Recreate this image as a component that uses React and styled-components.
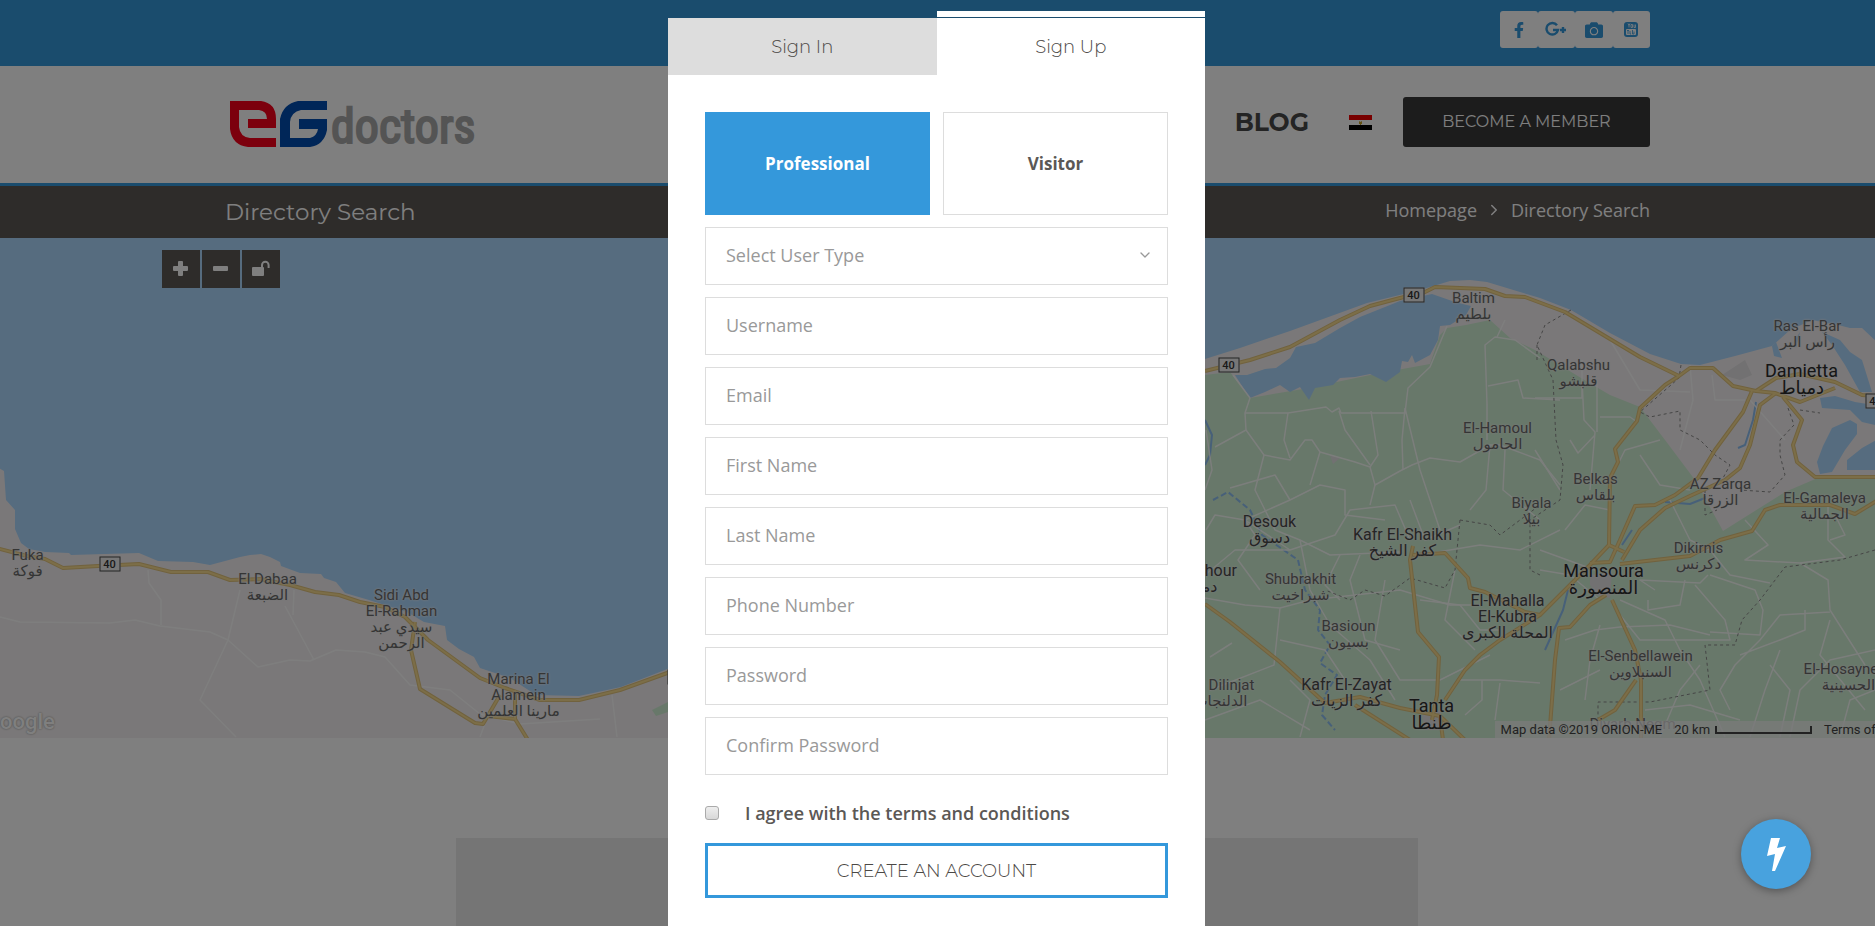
import React from 'react';
import styled, { createGlobalStyle, css } from 'styled-components';
import { FaFacebookF, FaCamera } from 'react-icons/fa';
import { FiChevronDown, FiChevronRight } from 'react-icons/fi';

const blue = '#3498db';
const heading = "Montserrat, Inter, 'Open Sans', sans-serif";
const bodyFont = "'Open Sans', 'Noto Sans', sans-serif";
const mapFont = "Roboto, 'DejaVu Sans', sans-serif";

const GlobalStyle = createGlobalStyle`
  *, *::before, *::after { box-sizing: border-box; }
  html, body, #root { height: 100%; }
  body {
    margin: 0;
    overflow: hidden;
    background: #fff;
    color: #5b5855;
    font-family: ${bodyFont};
    font-size: 18px;
  }
  button, input, select { font: inherit; color: inherit; margin: 0; }
`;

const Page = styled.div`
  min-height: 100%;
  display: flex;
  flex-direction: column;
`;

const Container = styled.div`
  width: 100%;
  max-width: 1425px;
  margin: 0 auto;
  display: flex;
  align-items: center;
  justify-content: ${(p) => (p.$end ? 'flex-end' : 'space-between')};
`;

const TopBar = styled.div`
  background: ${blue};
  padding: 11px 0 18px;
`;

const SocialList = styled.nav`
  display: grid;
  grid-template-columns: repeat(4, 1fr);
  width: 150px;
  height: 37px;
`;

const SocialLink = styled.a`
  display: flex;
  align-items: center;
  justify-content: center;
  border-radius: 3px;
  background: #fff;
  color: ${blue};
  font-size: 16px;
`;

const Header = styled.header`
  background: #fff;
  border-bottom: 3px solid ${blue};
  padding: 31px 0 36px;
`;

const Brand = styled.a`
  display: flex;
  align-items: flex-end;
  gap: 3px;
  height: 50px;
  padding-left: 5px;
  text-decoration: none;
`;

const BrandWord = styled.span`
  color: #a8a8a8;
  font-family: 'Liberation Sans Narrow', 'Roboto Condensed', 'DejaVu Sans Condensed', sans-serif;
  font-size: 48px;
  line-height: 40px;
  -webkit-text-stroke: 2px #a8a8a8;
`;

const MainNav = styled.nav`
  display: flex;
  align-items: center;
`;

const NavLink = styled.a`
  color: #484848;
  font: 700 25px/32px ${heading};
  text-decoration: none;
  margin-right: 40px;
`;

const Flag = styled.a`
  display: flex;
  margin-right: 31px;
`;

const MemberButton = styled.button`
  width: 247px;
  height: 50px;
  border: 0;
  border-radius: 3px;
  background: #383838;
  color: #fff;
  font: 400 16px/24px ${heading};
`;

const TitleBar = styled.div`
  background: #5c5855;
  color: #fff;
  height: 52px;
  display: flex;
`;

const PageTitle = styled.h1`
  margin: 0;
  font: 400 23px/32px ${heading};
`;

const Breadcrumb = styled.nav`
  display: flex;
  align-items: center;
  gap: 8px;
  line-height: 24px;
  padding-bottom: 4px;
  a { color: inherit; text-decoration: none; }
`;

const MapArea = styled.section`
  position: relative;
  height: 500px;
  overflow: hidden;
  background: #acd8ff;
`;

const MapDrawing = styled.svg`
  position: absolute;
  top: 0;
  left: calc(50% - 938px);
  width: 1876px;
  height: 500px;
  overflow: visible;
`;

const MapPin = styled.div`
  position: absolute;
  left: calc(50% + ${(p) => p.$x - 937}px);
  top: ${(p) => p.$y - 238}px;
  transform: translate(-50%, -8px);
  text-align: center;
  white-space: nowrap;
  font-family: ${mapFont};
  font-size: 15px;
  line-height: 16px;
  color: #6a6a6a;
  text-shadow: 0 0 2px #eee, 0 0 2px #eee;
  ${(p) => p.$size === 'town' && css`font-size: 16px; color: #4a4a4a;`}
  ${(p) => p.$size === 'city' && css`font-size: 18px; line-height: 17px; color: #2c2c2c;`}
`;

const RoadShield = styled.span`
  position: absolute;
  left: calc(50% + ${(p) => p.$x - 937}px);
  top: ${(p) => p.$y - 238}px;
  transform: translate(-50%, -50%);
  width: 21px;
  height: 15px;
  border: 1px solid #4a4a4a;
  background: #eee;
  color: #333;
  font: 500 11px/13px ${mapFont};
  text-align: center;
`;

const MapControls = styled.div`
  position: relative;
  display: flex;
  gap: 2px;
  width: 100%;
  max-width: 1552px;
  margin: 12px auto 0;
`;

const MapButton = styled.button`
  width: 38px;
  height: 38px;
  border: 0;
  padding: 0 0 2px;
  display: flex;
  align-items: center;
  justify-content: center;
  background: #5c5855;
  color: #fff;
`;

const GoogleMark = styled.span`
  position: absolute;
  left: -15px;
  bottom: 3px;
  font: 500 22px/26px ${mapFont};
  color: #fff;
  text-shadow: 0 0 2px #888;
`;

const MapFooter = styled.div`
  position: absolute;
  right: -26px;
  bottom: 0;
  height: 17px;
  display: flex;
  align-items: center;
  gap: 12px;
  padding-left: 6px;
  background: rgba(245, 245, 245, 0.75);
  color: #444;
  font: 400 13px/17px ${mapFont};
  white-space: nowrap;
`;

const Scale = styled.span`
  display: flex;
  align-items: center;
  gap: 5px;
  &::after {
    content: '';
    width: 97px;
    height: 8px;
    border: 2px solid #444;
    border-top: 0;
  }
`;

const Results = styled.main`
  flex: 1;
  padding: 100px 2px 0 0;
  background: #fff;
  display: flex;
  justify-content: center;
`;

const ResultsPanel = styled.div`
  width: 962px;
  min-height: 87px;
  background: #ebebeb;
`;

const Overlay = styled.div`
  position: fixed;
  inset: 0;
  overflow: hidden;
  display: flex;
  justify-content: center;
  align-items: flex-start;
  padding: 18px 2px 0 0;
  background: rgba(0, 0, 0, 0.5);
`;

const Dialog = styled.div`
  width: 537px;
  max-width: 100%;
  background: #fff;
`;

const Tabs = styled.div`
  display: flex;
`;

const Tab = styled.button`
  position: relative;
  flex: 1;
  height: 57px;
  border: 0;
  background: ${(p) => (p.$active ? '#fff' : '#ddd')};
  color: #4b4845;
  font: 300 18px/24px ${heading};
  ${(p) =>
    p.$active &&
    css`
      &::before {
        content: '';
        position: absolute;
        left: 0;
        right: 0;
        top: -7px;
        height: 6px;
        background: #fff;
      }
    `}
`;

const Form = styled.form`
  display: flex;
  flex-direction: column;
  gap: 12px;
  padding: 37px 37px 40px;
`;

const RoleRow = styled.div`
  display: grid;
  grid-template-columns: 1fr 1fr;
  gap: 13px;
`;

const RoleButton = styled.button`
  height: 103px;
  border: 1px solid ${(p) => (p.$active ? blue : '#ddd')};
  background: ${(p) => (p.$active ? blue : '#fff')};
  color: ${(p) => (p.$active ? '#fff' : '#5b5855')};
  font-weight: 700;
  font-size: 17px;
`;

const fieldStyle = css`
  width: 100%;
  height: 58px;
  border: 1px solid #ddd;
  border-radius: 0;
  background: #fff;
  padding: 0 20px 2px;
  color: #999;
  font-size: 18px;
`;

const Field = styled.input`
  ${fieldStyle}
  &::placeholder { color: #999; opacity: 1; }
`;

const SelectWrap = styled.div`
  position: relative;
  svg {
    position: absolute;
    right: 15px;
    top: 20px;
    color: #999;
    pointer-events: none;
  }
`;

const Select = styled.select`
  ${fieldStyle}
  display: block;
  appearance: none;
`;

const Agreement = styled.label`
  display: flex;
  align-items: center;
  gap: 26px;
  margin: 13px 0 5px;
  height: 26px;
  font-weight: 600;
  line-height: 26px;
`;

const Checkbox = styled.input`
  appearance: none;
  width: 14px;
  height: 14px;
  border: 1px solid #aaa;
  border-radius: 3px;
  background: linear-gradient(#eee, #d8d8d8);
`;

const SubmitButton = styled.button`
  height: 55px;
  border: 3px solid ${blue};
  background: #fff;
  color: #4b4845;
  font: 300 18px/24px ${heading};
`;

const QuickButton = styled.button`
  position: fixed;
  right: 64px;
  bottom: 37px;
  width: 70px;
  height: 70px;
  padding: 0;
  border: 0;
  border-radius: 50%;
  display: flex;
  align-items: center;
  justify-content: center;
  background: #48a2de;
  box-shadow: 0 2px 8px rgba(0, 0, 0, 0.35);
`;

const pins = [
  [27, 555, '', 'Fuka', 'فوكة'],
  [267, 579, '', 'El Dabaa', 'الضبعة'],
  [401, 595, '', 'Sidi Abd', 'El-Rahman', 'سيدي عبد', 'الرحمن'],
  [518, 679, '', 'Marina El', 'Alamein', 'مارينا العلمين'],
  [1473, 298, '', 'Baltim', 'بلطيم'],
  [1497, 428, '', 'El-Hamoul', 'الحامول'],
  [1807, 326, '', 'Ras El-Bar', 'رأس البر'],
  [1578, 365, '', 'Qalabshu', 'قلبشو'],
  [1801, 370, 'city', 'Damietta', 'دمياط'],
  [1595, 479, '', 'Belkas', 'بلقاس'],
  [1720, 484, '', 'AZ Zarqa', 'الزرقا'],
  [1824, 498, '', 'El-Gamaleya', 'الجمالية'],
  [1531, 503, '', 'Biyala', 'بيلا'],
  [1269, 522, 'town', 'Desouk', 'دسوق'],
  [1402, 535, 'town', 'Kafr El-Shaikh', 'كفر الشيخ'],
  [1698, 548, '', 'Dikirnis', 'دكرنس'],
  [1603, 570, 'city', 'Mansoura', 'المنصورة'],
  [1195, 571, 'town', 'Damanhour', 'دمنهور'],
  [1300, 579, '', 'Shubrakhit', 'شبراخيت'],
  [1507, 601, 'town', 'El-Mahalla', 'El-Kubra', 'المحلة الكبرى'],
  [1348, 626, '', 'Basioun', 'بسيون'],
  [1640, 656, '', 'El-Senbellawein', 'السنبلاوين'],
  [1848, 669, '', 'El-Hosayneya', 'الحسينية'],
  [1220, 685, '', 'Ad Dilinjat', 'الدلنجات'],
  [1346, 685, 'town', 'Kafr El-Zayat', 'كفر الزيات'],
  [1431, 705, 'city', 'Tanta', 'طنطا'],
  [1632, 724, '', 'Diyarb Negm'],
];

const shields = [[109, 564], [677, 677], [1228, 365], [1413, 295], [1875, 401]];

const highways = [
  'M-4 548L27 556L45 559L63 568L98 566L139 564L171 572L208 572L230 580L260 579L290 585L315 592L339 595L360 602L385 607L405 617L428 640L480 678L505 688L540 700H579L620 690L670 672',
  'M415 622L411 650L420 689L475 723L483 724L500 695M488 716L515 719L528 740M515 719V690',
  'M1205 371L1250 360L1290 347L1340 320L1370 306L1400 298L1425 292L1435 287L1485 289L1505 296L1525 297L1565 312L1640 357L1679 376L1690 368L1713 368L1733 386L1756 391L1775 393L1800 402L1835 388',
  'M1756 391L1776 378L1800 374L1835 382L1862 395L1875 396',
  'M1679 376L1665 385L1640 408L1637 421L1615 449L1618 462L1610 478L1609 545L1590 565L1575 580L1540 615L1500 640L1480 655L1465 670L1445 700',
  'M1752 391L1743 412L1715 450L1698 478L1675 495L1655 505L1635 506L1620 540L1610 562L1590 563',
  'M1776 393L1760 405L1750 445L1740 468L1725 480L1690 496L1665 508L1640 530L1622 560',
  'M1783 397L1802 420L1793 445L1797 462L1815 477H1878',
  'M1878 500L1855 514L1830 505H1780L1765 510L1752 531L1720 540L1690 556L1620 564M1609 545L1624 552',
  'M1413 546L1410 560L1418 632L1439 657L1437 695L1432 720M1413 555L1445 553L1468 578L1470 588L1485 592L1525 612L1540 615',
  'M1205 604L1230 622L1280 662L1325 703L1360 697L1400 708L1440 716L1465 740M1355 705L1410 740M1440 716L1443 740',
  'M1606 595L1590 605L1570 627L1559 628L1555 660L1549 740M1612 600L1635 650L1641 680V740M1636 680L1615 710L1598 720',
];

const streets = [
  'M0 617L20 622L110 623L135 620L160 626L210 632L228 640L258 667L290 660L310 661L336 650L365 652L385 657L410 685L450 690L480 714L520 724L600 719',
  'M236 737L200 700L228 640L240 590M285 606L314 660M148 570L149 583L161 600V625M294 590L293 615M612 695L617 737M480 737L487 718',
  'M1233 375L1250 398L1245 413L1246 430L1215 447M1245 413H1288L1326 407L1332 412L1339 408L1341 413H1405L1408 388L1430 367L1447 326',
  'M1246 430L1264 455L1290 460L1305 440H1312L1320 452L1355 462L1370 467L1375 485L1400 471L1412 465L1430 458L1460 462L1490 445L1500 445M1288 413L1284 440L1290 458',
  'M1339 411L1345 430L1370 465M1371 411L1378 455L1370 467M1405 408L1402 440L1403 470M1405 408L1420 470L1440 530M1487 440V404L1485 345L1495 337L1515 340L1540 358M1488 386L1518 380L1523 398L1560 400',
  'M1500 445L1540 460L1560 485M1490 445L1486 490L1470 510M1505 450L1503 490L1540 520M1505 320L1497 337M1264 455L1255 490L1275 530L1300 540L1330 555L1400 552',
  'M1206 530L1215 515L1245 520L1290 550L1335 535L1350 510L1395 505L1410 540M1205 575L1235 550L1290 550M1245 520L1290 500L1320 485L1345 490V515L1385 520',
  'M1205 598L1245 605L1280 608L1310 600L1400 590L1450 605L1480 605M1280 608L1274 665L1210 690M1300 540L1310 590L1330 625L1370 660L1395 700M1232 643L1210 657M1280 640L1325 650L1345 680',
  'M1410 500L1425 540L1460 525M1420 555L1480 545L1520 550L1560 530M1385 580L1375 640L1400 680L1440 680L1490 655M1460 680H1500L1540 683M1482 680V700L1465 715M1500 683L1495 720',
  'M1205 720L1260 700L1310 730M1290 680L1310 700L1300 737M1455 570L1445 620L1475 650M1420 600L1460 605L1480 630L1500 630',
  'M1535 398H1582V360M1582 380L1584 420L1595 432L1590 490M1597 380V432M1600 417H1630L1637 422M1570 440L1578 453L1595 435M1610 480L1625 450L1660 440M1640 455L1660 485L1690 490M1535 450L1560 490',
  'M1610 340L1640 390L1690 392M1690 365L1693 400L1680 450M1750 400L1785 440M1712 375L1715 400H1745',
  'M1670 500L1690 540L1710 550L1730 575L1770 583M1708 575L1700 583L1640 580L1655 590M1710 575L1755 590L1763 610L1760 635L1710 632M1745 520L1768 545L1745 560L1800 563L1845 557L1828 540V505M1830 540L1845 535L1835 515',
  'M1695 585L1725 620L1730 640L1640 640L1620 615M1648 600V610L1680 605L1685 580M1800 563L1828 580L1830 610L1865 665M1830 612L1780 615L1760 640L1735 665L1720 690L1730 710M1805 610V630L1780 640L1740 655',
  'M1565 640L1595 630L1620 627L1670 625L1710 635M1600 625L1590 660L1585 700M1620 600L1665 620L1680 650L1700 680L1725 737M1780 650L1765 690L1750 737M1830 620L1820 655L1865 710M1790 737L1800 690L1830 660L1875 650',
  'M1645 710L1690 705L1740 720M1660 737L1680 690L1700 665M1560 690L1600 670M1540 570L1570 575L1600 600M1610 510L1585 505L1565 530M1540 550L1595 570M1770 665L1790 690L1780 737M1840 737L1850 700L1875 690',
  'M1206 430L1212 470L1205 490M1245 520L1255 535L1238 560L1260 590M1290 500L1275 475L1230 488M1320 452L1310 485M1375 485L1370 505M1340 555L1325 585L1340 600M1360 555L1350 580L1365 640L1400 650',
];

const borders = [
  'M1571 310L1545 325L1537 345L1553 380L1556 440L1563 465L1560 500L1530 520M1537 345V360',
  'M1681 365L1679 378L1640 412L1650 417L1680 411V430L1700 440L1715 455L1730 465L1722 480',
  'M1788 408L1794 425L1780 440V455L1785 475L1770 492L1740 490M1800 410L1820 413M1705 490V515L1717 510',
  'M1875 550L1840 560L1785 567L1760 600L1742 620L1735 645L1705 645L1710 690L1650 702L1598 702V720',
  'M1460 520L1490 525L1500 535L1540 505M1460 520L1455 570L1445 588L1410 578L1385 596L1365 590L1350 600L1325 590M1540 575L1530 570V520',
];

function GoogleShape() {
  return (
    <svg width="22" height="18" viewBox="0 0 22 18" fill="none" stroke="currentColor" strokeWidth="2.4" aria-hidden="true">
      <path d="M12 4.3A5.8 5.8 0 1 0 13 9H8" />
      <path d="M18 6v6M15 9h6" />
    </svg>
  );
}

function VideoShape() {
  return (
    <svg width="14" height="15" viewBox="0 0 14 15" fill="none" aria-hidden="true">
      <rect width="14" height="15" rx="3" fill="currentColor" />
      <rect x="2" y="7" width="10" height="6" rx="1" fill="#fff" />
      <path d="M4 1.500l1 2v2M6 1.500l-1 2M7 2.500v3h1.500v-3zM10 2.500v3h1.500v-3" stroke="#fff" strokeWidth="0.8" />
      <path d="M3 8.500h2M4 8.500v3.500M6 9v3h1M8.500 8v4h1.500V9.500" stroke="currentColor" strokeWidth="0.8" />
    </svg>
  );
}

function BrandMark() {
  return (
    <svg width="98" height="46" viewBox="0 0 98 46" aria-hidden="true">
      <path fill="#f8001a" d="M0 0H31Q46 2 46 18V27H18V18H37Q37 10 29 9H9V26Q10 36 20 37H46V46H18Q2 44 0 28Z" />
      <path fill="#004cb0" d="M97 0V9H71Q61 11 60 21V37H80Q87 35 88 28H69V18H97V29Q94 44 80 46H50V18Q53 3 68 0Z" />
    </svg>
  );
}

function EgyptFlag() {
  return (
    <svg width="23" height="15" viewBox="0 0 23 15" aria-hidden="true">
      <path fill="#fff" d="M0 0h23v15H0z" />
      <path fill="#f00000" d="M0 0h23v5H0z" />
      <path fill="#000" d="M0 10h23v5H0z" />
      <path fill="#c9a227" d="M10 6l1.500 1 1.500-1v3h-1v1h-1V9h-1z" />
    </svg>
  );
}

function CoastMap() {
  return (
    <MapDrawing viewBox="0 238 1876 500" aria-hidden="true" fill="none" strokeLinejoin="round">
      <path
        fill="#f5f1f2"
        d="M-5 466L4 471L6 500L15 510V529L21 543L29 549L45 552L69 553L71 555L139 553L158 561L193 562L210 565L240 557L250 555L261 554L270 557L280 562L281 566L300 573L321 574L324 578L336 582L345 593L369 600L407 612L424 622L445 626L447 640L459 649L474 657L480 668L510 678L536 695L579 696L621 687L670 668L937 520L1205 359L1240 348L1290 331L1367 303L1420 290L1450 281L1470 280L1487 282L1520 292L1540 298L1571 310L1610 333L1650 354L1681 364L1700 365L1735 356L1772 346L1790 330L1812 320L1838 325L1850 328L1862 328L1880 345V740H-5Z"
      />
      <path
        fill="#d0f0d4"
        d="M1205 375L1230 372L1250 398L1303 389L1375 374L1430 364L1440 335L1447 328L1466 325L1490 320L1510 338L1535 350L1586 381L1610 395L1640 407L1665 440L1695 480L1723 531L1785 492L1820 477H1880V740H1205ZM652 710L668 702V712L656 716Z"
      />
      <path fill="#e4e2e4" d="M1722 375L1745 360L1752 375L1740 380ZM1590 575L1612 572L1610 598L1598 596L1590 585ZM1422 715L1440 710L1445 730L1425 730ZM1330 455L1340 458L1333 464Z" />
      <path
        fill="#acd8ff"
        d="M1235 375L1247 375L1265 369L1276 368L1290 358L1296 347L1315 343L1340 328L1360 317L1400 301L1432 294L1455 302L1471 306L1466 315L1450 325L1440 326L1438 340L1430 355L1415 363L1412 355L1408 362L1402 361L1400 372L1386 382L1370 374L1355 377L1340 378L1333 385L1315 388L1309 400L1300 387L1290 392L1280 385L1265 392L1250 398L1240 383Z"
      />
      <path
        fill="#acd8ff"
        d="M1820 474L1817 462L1823 446L1832 428L1850 420L1857 424L1857 434L1845 450L1832 472ZM1847 470L1847 460L1862 448L1880 438V470ZM1822 332L1840 340L1850 352L1862 360L1872 392L1860 392L1845 365L1832 345ZM1820 398L1835 396L1855 402L1880 406V426L1862 422L1850 410L1822 408ZM1772 346L1776 342L1782 358L1774 356ZM1795 340L1800 332L1796 348Z"
      />
      <g stroke="#8fc0f2" strokeWidth="2">
        <path d="M1213 500L1228 492L1250 510L1262 535L1298 560L1305 590L1320 610L1318 630L1330 645L1320 663L1337 675L1325 695L1322 715L1335 730" strokeDasharray="6 3" />
        <path d="M1205 420L1212 435L1210 455L1205 465M1756 402L1753 420L1745 445L1738 448M1665 502L1690 504L1705 498M1632 530L1622 545M1568 590L1563 610L1545 650" />
      </g>
      <g stroke="#fff" strokeWidth="1.500" opacity="0.85">
        {streets.map((d) => <path key={d} d={d} />)}
      </g>
      <g stroke="#8b8b8b" strokeWidth="1" strokeDasharray="3 3">
        {borders.map((d) => <path key={d} d={d} />)}
      </g>
      <g stroke="#e2c47c" strokeWidth="4">
        {highways.map((d) => <path key={d} d={d} />)}
      </g>
      <g stroke="#f8dc90" strokeWidth="2">
        {highways.map((d) => <path key={d} d={d} />)}
      </g>
    </MapDrawing>
  );
}

const fields = [
  ['Username', 'text'],
  ['Email', 'email'],
  ['First Name', 'text'],
  ['Last Name', 'text'],
  ['Phone Number', 'tel'],
  ['Password', 'password'],
  ['Confirm Password', 'password'],
];

export default function App() {
  return (
    <>
      <GlobalStyle />
      <Page>
        <TopBar>
          <Container $end>
            <SocialList>
              <SocialLink href="#" aria-label="Facebook"><FaFacebookF /></SocialLink>
              <SocialLink href="#" aria-label="Google Plus"><GoogleShape /></SocialLink>
              <SocialLink href="#" aria-label="Photos"><FaCamera size={18} /></SocialLink>
              <SocialLink href="#" aria-label="YouTube"><VideoShape /></SocialLink>
            </SocialList>
          </Container>
        </TopBar>
        <Header>
          <Container>
            <Brand href="#" aria-label="EG doctors">
              <BrandMark />
              <BrandWord>doctors</BrandWord>
            </Brand>
            <MainNav>
              <NavLink href="#">BLOG</NavLink>
              <Flag href="#" aria-label="Arabic"><EgyptFlag /></Flag>
              <MemberButton type="button">BECOME A MEMBER</MemberButton>
            </MainNav>
          </Container>
        </Header>
        <TitleBar>
          <Container>
            <PageTitle>Directory Search</PageTitle>
            <Breadcrumb>
              <a href="#">Homepage</a>
              <FiChevronRight size={18} />
              <span>Directory Search</span>
            </Breadcrumb>
          </Container>
        </TitleBar>
        <MapArea>
          <CoastMap />
          {shields.map(([x, y]) => <RoadShield key={x} $x={x} $y={y}>40</RoadShield>)}
          {pins.map(([x, y, size, ...lines]) => (
            <MapPin key={lines[0]} $x={x} $y={y} $size={size}>
              {lines.map((line) => <div key={line}>{line}</div>)}
            </MapPin>
          ))}
          <MapControls>
            <MapButton type="button" aria-label="Zoom in">
              <svg width="15" height="15" viewBox="0 0 15 15" aria-hidden="true">
                <path fill="currentColor" d="M6 0h3q1 0 1 1v4h4q1 0 1 1v3q0 1-1 1h-4v4q0 1-1 1H6q-1 0-1-1v-4H1q-1 0-1-1V6q0-1 1-1h4V1q0-1 1-1z" />
              </svg>
            </MapButton>
            <MapButton type="button" aria-label="Zoom out">
              <svg width="15" height="5" viewBox="0 0 15 5" aria-hidden="true">
                <rect width="15" height="5" rx="1" fill="currentColor" />
              </svg>
            </MapButton>
            <MapButton type="button" aria-label="Unlock map">
              <svg width="18" height="16" viewBox="0 0 18 16" fill="none" aria-hidden="true">
                <rect y="7" width="12" height="9" rx="1" fill="currentColor" />
                <path d="M10 8V5a3.300 3.300 0 0 1 6.600 0v3" stroke="currentColor" strokeWidth="2" />
              </svg>
            </MapButton>
          </MapControls>
          <GoogleMark>Google</GoogleMark>
          <MapFooter>
            <span>Map data ©2019 ORION-ME</span>
            <Scale>20 km</Scale>
            <span>Terms of Use</span>
          </MapFooter>
        </MapArea>
        <Results><ResultsPanel /></Results>
      </Page>

      <Overlay>
        <Dialog role="dialog" aria-label="Sign Up">
          <Tabs>
            <Tab type="button">Sign In</Tab>
            <Tab type="button" $active>Sign Up</Tab>
          </Tabs>
          <Form>
            <RoleRow>
              <RoleButton type="button" $active>Professional</RoleButton>
              <RoleButton type="button">Visitor</RoleButton>
            </RoleRow>
            <SelectWrap>
              <Select aria-label="Select User Type" defaultValue="">
                <option value="">Select User Type</option>
              </Select>
              <FiChevronDown size={16} />
            </SelectWrap>
            {fields.map(([name, type]) => (
              <Field key={name} type={type} placeholder={name} aria-label={name} />
            ))}
            <Agreement>
              <Checkbox type="checkbox" />
              I agree with the terms and conditions
            </Agreement>
            <SubmitButton type="submit">CREATE AN ACCOUNT</SubmitButton>
          </Form>
        </Dialog>
      </Overlay>
      <QuickButton type="button" aria-label="Quick actions">
        <svg width="19" height="33" viewBox="0 0 19 33" aria-hidden="true">
          <path fill="#fff" d="M4 0H13L10 10L19 8L8 33H5L8 16L0 18Z" />
        </svg>
      </QuickButton>
    </>
  );
}
